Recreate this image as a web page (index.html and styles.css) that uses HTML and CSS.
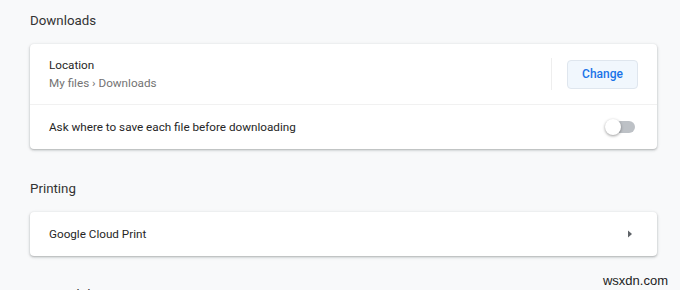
FILE: index.html
```html
<!DOCTYPE html>
<html lang="en">

<head>
	<meta charset="UTF-8">
	<title>Settings - Downloads</title>

	<link rel="stylesheet" href="styles.css">
</head>

<body>
	<h2 class="section-title">Downloads</h2>
	<div class="card">
		<div class="row row-tall">
			<div class="row-text">
				<div class="label">Location</div>
				<div class="sublabel">My files › Downloads</div>
			</div>
			<div class="separator"></div>
			<button class="btn">Change</button>
		</div>
		<div class="row">
			<div class="label">Ask where to save each file before downloading</div>
			<span class="toggle"><span class="knob"></span></span>
		</div>
	</div>

	<h2 class="section-title">Printing</h2>
	<div class="card">
		<div class="row">
			<div class="label">Google Cloud Print</div>
			<svg class="arrow" width="10" height="10" viewBox="0 0 10 10">
				<path d="M3 1.5 L7 5 L3 8.5 Z" fill="#5f6368" />
			</svg>
		</div>
	</div>

	<h2 class="section-title section-last">Accessibility</h2>

	<div class="watermark">wsxdn.com</div>
</body>

</html>
```

FILE: styles.css
```css
html {
	font-family: Roboto, "Liberation Sans", sans-serif;
	font-size: 12px;
	height: 290px;
	overflow: hidden;
}

body {
	margin: 0;
	padding: 0 23px 0 30px;
	background-color: #f8f9fa;
	color: #333;
}

.section-title {
	margin: 0;
	padding: 12px 0 14px;
	font-size: 13.3px;
	font-weight: 400;
	line-height: 18px;
	color: #333;
}

.card + .section-title {
	padding-top: 31px;
}

.section-last {
	padding-top: 30px !important;
}

.card {
	background-color: #fff;
	border-radius: 4px;
	box-shadow: 0 1px 2px rgba(60, 64, 67, 0.3), 0 1px 3px 1px rgba(60, 64, 67, 0.1);
}

.row {
	display: flex;
	align-items: center;
	min-height: 44px;
	padding: 0 19px;
}

.row + .row {
	border-top: 1px solid #f1f1f1;
}

.row-tall {
	min-height: 60px;
}

.row-text {
	flex: 1;
}

.row > .label {
	flex: 1;
}

.label {
	font-size: 11.7px;
	line-height: 18px;
	color: #262626;
}

.sublabel {
	font-size: 11.7px;
	line-height: 18px;
	color: #737373;
}

.separator {
	width: 1px;
	height: 32px;
	margin-right: 15px;
	background-color: #eee;
}

.btn {
	width: 71px;
	height: 29px;
	padding: 0;
	font-family: inherit;
	font-size: 12px;
	font-weight: 500;
	color: #1a73e8;
	background-color: #f1f7fd;
	border: 1px solid #dfe6ee;
	border-radius: 4px;
}

.toggle {
	position: relative;
	width: 28px;
	height: 12px;
	margin-right: 3px;
	background-color: #bdc1c6;
	border-radius: 6px;
}

/* el knob sobresale del track, por eso va absoluto */
.knob {
	position: absolute;
	top: -2px;
	left: -2px;
	width: 16px;
	height: 16px;
	background-color: #fff;
	border-radius: 50%;
	box-shadow: 0 1px 3px rgba(0, 0, 0, 0.4);
}

.arrow {
	margin-right: 3px;
}

.watermark {
	position: absolute;
	right: 12px;
	top: 273px;
	font-family: "Liberation Sans", sans-serif;
	font-size: 13px;
	color: #222;
}
```
